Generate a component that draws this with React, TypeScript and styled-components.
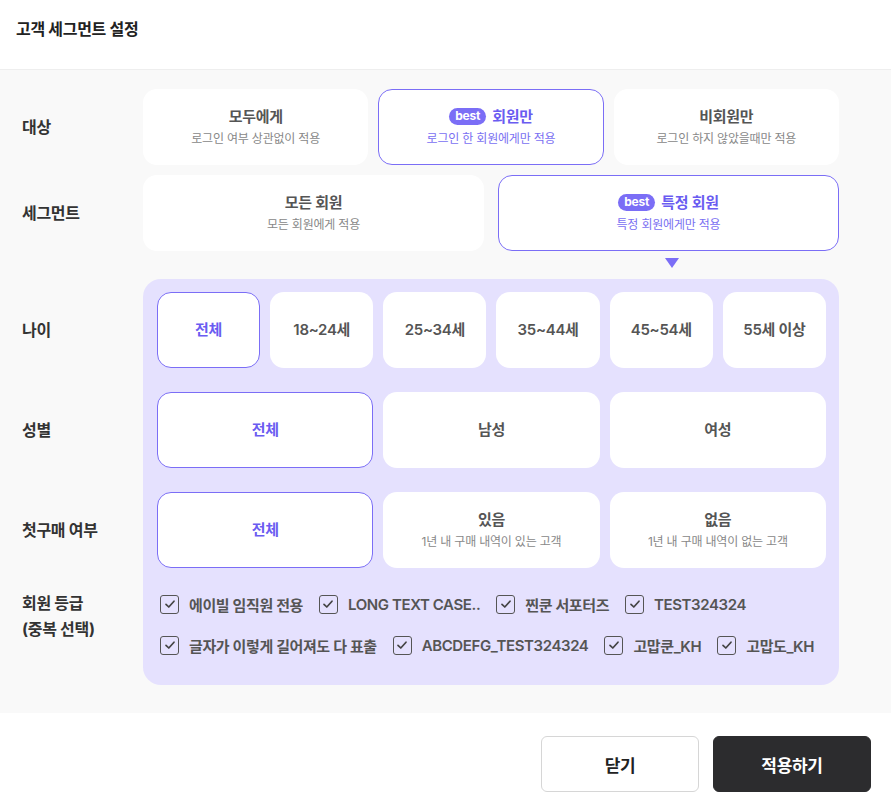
import React, { useState } from 'react';
import styled, { createGlobalStyle, css } from 'styled-components';

const GlobalStyle = createGlobalStyle`
  * { box-sizing: border-box; }
  body {
    margin: 0;
    background: #ffffff;
    font-family: Inter, "Noto Sans CJK KR", "Noto Sans", sans-serif;
    color: #333;
  }
`;

const accent = '#7b6ef6';
const accentText = '#6a5cf1';

const Page = styled.div`
  width: 891px;
  min-height: 805px;
  display: flex;
  flex-direction: column;
  background: #fff;
`;

const Header = styled.header`
  height: 70px;
  padding: 18px 16px 0;
  border-bottom: 1px solid #eeeeee;
`;

const Title = styled.h1`
  margin: 0;
  font-size: 16px;
  line-height: 22px;
  font-weight: 700;
  color: #222;
  letter-spacing: -0.3px;
`;

const Main = styled.main`
  background: #f9f9f9;
  padding: 19px 52px 28px 22px;
  display: flex;
  flex-direction: column;
`;

const Row = styled.section<{ $top?: number }>`
  display: grid;
  grid-template-columns: 121px minmax(0, 1fr);
  align-items: center;
  margin-top: ${(p) => p.$top ?? 0}px;
`;

const RowLabel = styled.div`
  font-size: 16px;
  font-weight: 700;
  color: #333;
  letter-spacing: -0.3px;
  line-height: 26px;
`;

const Options = styled.div<{ $cols: number; $gap?: number }>`
  display: grid;
  grid-template-columns: repeat(${(p) => p.$cols}, minmax(0, 1fr));
  gap: ${(p) => p.$gap ?? 10}px;
`;

const Card = styled.button<{ $active?: boolean }>`
  height: 76px;
  border-radius: 14px;
  background: #fff;
  border: 1px solid ${(p) => (p.$active ? accent : 'transparent')};
  display: flex;
  flex-direction: column;
  align-items: center;
  justify-content: center;
  gap: 3px;
  font-family: inherit;
  cursor: pointer;
  padding: 0;
`;

const CardTitle = styled.span<{ $active?: boolean }>`
  display: flex;
  align-items: center;
  gap: 6px;
  font-size: 15px;
  line-height: 20px;
  font-weight: 600;
  letter-spacing: -0.3px;
  color: ${(p) => (p.$active ? accentText : '#555')};
`;

const CardSub = styled.span<{ $active?: boolean }>`
  font-size: 12px;
  line-height: 18px;
  letter-spacing: -0.2px;
  color: ${(p) => (p.$active ? '#7a6ff2' : '#888')};
`;

const Badge = styled.span`
  background: ${accent};
  color: #fff;
  font-size: 12px;
  line-height: 16px;
  font-weight: 700;
  padding: 0 6px 1px;
  border-radius: 9px;
  letter-spacing: -0.2px;
`;

const ArrowRow = styled.div`
  display: grid;
  grid-template-columns: 121px minmax(0, 1fr) minmax(0, 1fr);
  column-gap: 14px;
  height: 28px;
  padding-top: 7px;
`;

const Arrow = styled.span`
  grid-column: 3;
  justify-self: center;
  width: 0;
  height: 0;
  border-left: 7px solid transparent;
  border-right: 7px solid transparent;
  border-top: 10px solid ${accent};
`;

const DetailRow = styled.section`
  display: grid;
  grid-template-columns: 121px minmax(0, 1fr);
`;

const LabelCol = styled.div`
  display: flex;
  flex-direction: column;
  gap: 24px;
  padding-top: 13px;
`;

const DetailLabel = styled(RowLabel)<{ $tall?: boolean }>`
  ${(p) =>
    p.$tall
      ? css`
          margin-top: -2px;
        `
      : css`
          height: 76px;
          display: flex;
          align-items: center;
        `}
`;

const Panel = styled.div`
  background: #e5e1fe;
  border-radius: 18px;
  padding: 13px 13px 28px 14px;
  display: flex;
  flex-direction: column;
  gap: 24px;
`;

const CheckGroup = styled.div`
  display: flex;
  flex-direction: column;
  gap: 17px;
`;

const CheckLine = styled.div`
  display: flex;
  align-items: center;
  gap: 16px;
  height: 24px;
  padding-left: 3px;
`;

const CheckItem = styled.label`
  display: flex;
  align-items: center;
  gap: 10px;
  font-size: 15px;
  font-weight: 600;
  color: #555;
  letter-spacing: -0.4px;
  white-space: nowrap;
  cursor: pointer;
`;

const Box = styled.span`
  width: 19px;
  height: 19px;
  border: 1.5px solid #555;
  border-radius: 3px;
  display: flex;
  align-items: center;
  justify-content: center;
  background: transparent;
`;

const Footer = styled.footer`
  display: flex;
  justify-content: flex-end;
  gap: 14px;
  padding: 23px 20px 13px;
  background: #fff;
`;

const FooterButton = styled.button<{ $primary?: boolean }>`
  width: 158px;
  height: 56px;
  border-radius: 6px;
  font-family: inherit;
  font-size: 17px;
  font-weight: 700;
  letter-spacing: -0.3px;
  cursor: pointer;
  border: 1px solid ${(p) => (p.$primary ? '#2c2c2e' : '#d6d6d6')};
  background: ${(p) => (p.$primary ? '#2c2c2e' : '#fff')};
  color: ${(p) => (p.$primary ? '#fff' : '#222')};
`;

const CheckMark = () => (
  <svg width="12" height="12" viewBox="0 0 12 12" fill="none">
    <polyline points="2,6.3 4.8,9 10,3.2" stroke="#444" strokeWidth="1.7" strokeLinecap="round" strokeLinejoin="round" />
  </svg>
);

const targets = [
  { title: '모두에게', sub: '로그인 여부 상관없이 적용' },
  { title: '회원만', sub: '로그인 한 회원에게만 적용', best: true },
  { title: '비회원만', sub: '로그인 하지 않았을때만 적용' },
];

const segments = [
  { title: '모든 회원', sub: '모든 회원에게 적용' },
  { title: '특정 회원', sub: '특정 회원에게만 적용', best: true },
];

const ages = ['전체', '18~24세', '25~34세', '35~44세', '45~54세', '55세 이상'];
const genders = ['전체', '남성', '여성'];
const firstBuy = [
  { title: '전체' },
  { title: '있음', sub: '1년 내 구매 내역이 있는 고객' },
  { title: '없음', sub: '1년 내 구매 내역이 없는 고객' },
];

const grades = [
  ['에이빌 임직원 전용', 'LONG TEXT CASE..', '찐쿤 서포터즈', 'TEST324324'],
  ['글자가 이렇게 길어져도 다 표출', 'ABCDEFG_TEST324324', '고맙쿤_KH', '고맙도_KH'],
];

const App = () => {
  const [target, setTarget] = useState(1);
  const [segment, setSegment] = useState(1);
  const [age, setAge] = useState(0);
  const [gender, setGender] = useState(0);
  const [first, setFirst] = useState(0);

  return (
    <Page>
      <GlobalStyle />
      <Header>
        <Title>고객 세그먼트 설정</Title>
      </Header>

      <Main>
        <Row>
          <RowLabel>대상</RowLabel>
          <Options $cols={3}>
            {targets.map((t, i) => (
              <Card key={t.title} $active={target === i} onClick={() => setTarget(i)}>
                <CardTitle $active={target === i}>
                  {t.best && <Badge>best</Badge>}
                  {t.title}
                </CardTitle>
                <CardSub $active={target === i}>{t.sub}</CardSub>
              </Card>
            ))}
          </Options>
        </Row>

        <Row $top={10}>
          <RowLabel>세그먼트</RowLabel>
          <Options $cols={2} $gap={14}>
            {segments.map((s, i) => (
              <Card key={s.title} $active={segment === i} onClick={() => setSegment(i)}>
                <CardTitle $active={segment === i}>
                  {s.best && <Badge>best</Badge>}
                  {s.title}
                </CardTitle>
                <CardSub $active={segment === i}>{s.sub}</CardSub>
              </Card>
            ))}
          </Options>
        </Row>

        <ArrowRow>
          <Arrow />
        </ArrowRow>

        <DetailRow>
          <LabelCol>
            <DetailLabel>나이</DetailLabel>
            <DetailLabel>성별</DetailLabel>
            <DetailLabel>첫구매 여부</DetailLabel>
            <DetailLabel $tall>
              회원 등급
              <br />
              (중복 선택)
            </DetailLabel>
          </LabelCol>

          <Panel>
            <Options $cols={6}>
              {ages.map((a, i) => (
                <Card key={a} $active={age === i} onClick={() => setAge(i)}>
                  <CardTitle $active={age === i}>{a}</CardTitle>
                </Card>
              ))}
            </Options>

            <Options $cols={3}>
              {genders.map((g, i) => (
                <Card key={g} $active={gender === i} onClick={() => setGender(i)}>
                  <CardTitle $active={gender === i}>{g}</CardTitle>
                </Card>
              ))}
            </Options>

            <Options $cols={3}>
              {firstBuy.map((f, i) => (
                <Card key={f.title} $active={first === i} onClick={() => setFirst(i)}>
                  <CardTitle $active={first === i}>{f.title}</CardTitle>
                  {f.sub && <CardSub>{f.sub}</CardSub>}
                </Card>
              ))}
            </Options>

            <CheckGroup>
              {grades.map((line, li) => (
                <CheckLine key={li}>
                  {line.map((g) => (
                    <CheckItem key={g}>
                      <Box>
                        <CheckMark />
                      </Box>
                      {g}
                    </CheckItem>
                  ))}
                </CheckLine>
              ))}
            </CheckGroup>
          </Panel>
        </DetailRow>
      </Main>

      <Footer>
        <FooterButton>닫기</FooterButton>
        <FooterButton $primary>적용하기</FooterButton>
      </Footer>
    </Page>
  );
};

export default App;
